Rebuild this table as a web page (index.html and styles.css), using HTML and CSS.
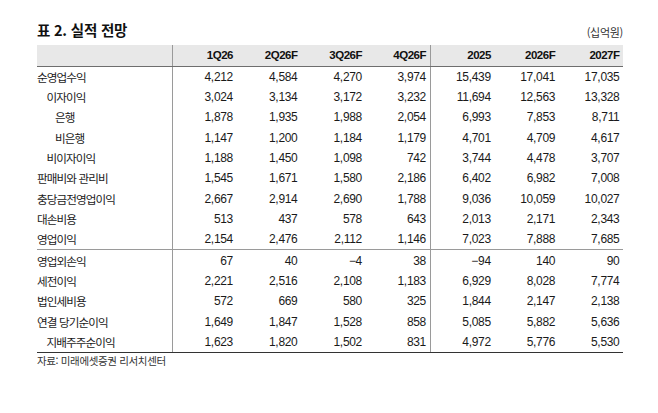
FILE: index.html
```html
<!DOCTYPE html>
<html lang="ko">
<head>
<meta charset="utf-8">
<link rel="stylesheet" href="styles.css">
</head>
<body>
<div class="page">
  <div class="top">
    <div class="title">표 2. 실적 전망</div>
    <div class="unit">(십억원)</div>
  </div>
  <table class="tbl">
    <colgroup>
      <col class="c-label">
      <col class="c-q"><col class="c-q"><col class="c-q"><col class="c-q">
      <col class="c-y"><col class="c-y"><col class="c-y">
    </colgroup>
    <thead>
      <tr>
        <th class="lab"></th>
        <th>1Q26</th><th>2Q26F</th><th>3Q26F</th><th class="div">4Q26F</th>
        <th>2025</th><th>2026F</th><th>2027F</th>
      </tr>
    </thead>
    <tbody>
      <tr><td class="lab">순영업수익</td><td>4,212</td><td>4,584</td><td>4,270</td><td class="div">3,974</td><td>15,439</td><td>17,041</td><td>17,035</td></tr>
      <tr><td class="lab i1">이자이익</td><td>3,024</td><td>3,134</td><td>3,172</td><td class="div">3,232</td><td>11,694</td><td>12,563</td><td>13,328</td></tr>
      <tr><td class="lab i2">은행</td><td>1,878</td><td>1,935</td><td>1,988</td><td class="div">2,054</td><td>6,993</td><td>7,853</td><td>8,711</td></tr>
      <tr><td class="lab i2">비은행</td><td>1,147</td><td>1,200</td><td>1,184</td><td class="div">1,179</td><td>4,701</td><td>4,709</td><td>4,617</td></tr>
      <tr><td class="lab i1">비이자이익</td><td>1,188</td><td>1,450</td><td>1,098</td><td class="div">742</td><td>3,744</td><td>4,478</td><td>3,707</td></tr>
      <tr><td class="lab">판매비와 관리비</td><td>1,545</td><td>1,671</td><td>1,580</td><td class="div">2,186</td><td>6,402</td><td>6,982</td><td>7,008</td></tr>
      <tr><td class="lab">충당금전영업이익</td><td>2,667</td><td>2,914</td><td>2,690</td><td class="div">1,788</td><td>9,036</td><td>10,059</td><td>10,027</td></tr>
      <tr><td class="lab">대손비용</td><td>513</td><td>437</td><td>578</td><td class="div">643</td><td>2,013</td><td>2,171</td><td>2,343</td></tr>
      <tr class="sep"><td class="lab">영업이익</td><td>2,154</td><td>2,476</td><td>2,112</td><td class="div">1,146</td><td>7,023</td><td>7,888</td><td>7,685</td></tr>
      <tr><td class="lab">영업외손익</td><td>67</td><td>40</td><td>−4</td><td class="div">38</td><td>−94</td><td>140</td><td>90</td></tr>
      <tr><td class="lab">세전이익</td><td>2,221</td><td>2,516</td><td>2,108</td><td class="div">1,183</td><td>6,929</td><td>8,028</td><td>7,774</td></tr>
      <tr><td class="lab">법인세비용</td><td>572</td><td>669</td><td>580</td><td class="div">325</td><td>1,844</td><td>2,147</td><td>2,138</td></tr>
      <tr><td class="lab">연결 당기순이익</td><td>1,649</td><td>1,847</td><td>1,528</td><td class="div">858</td><td>5,085</td><td>5,882</td><td>5,636</td></tr>
      <tr class="last"><td class="lab i1">지배주주순이익</td><td>1,623</td><td>1,820</td><td>1,502</td><td class="div">831</td><td>4,972</td><td>5,776</td><td>5,530</td></tr>
    </tbody>
  </table>
  <div class="source">자료: 미래에셋증권 리서치센터</div>
</div>
</body>
</html>
```

FILE: styles.css
```css
html, body {
  margin: 0;
  padding: 0;
  background: #ffffff;
}

.page {
  width: 586px;
  padding: 21px 0 0 37px;
  color: #1a1a1a;
  font-family: "Liberation Sans", "Noto Sans CJK KR", sans-serif;
}

.top {
  display: flex;
  justify-content: space-between;
  align-items: flex-end;
  height: 18px;
  margin-bottom: 5.5px;
}

.title {
  font-family: "Noto Sans CJK KR", sans-serif;
  font-weight: 700;
  font-size: 14.5px;
  line-height: 18px;
  letter-spacing: -0.2px;
  color: #111;
}

.unit {
  font-family: "Noto Sans CJK KR", sans-serif;
  font-size: 11px;
  line-height: 14px;
  letter-spacing: -0.3px;
  color: #333;
  padding-right: 0;
}

.tbl {
  width: 586px;
  table-layout: fixed;
  border-collapse: collapse;
  border-spacing: 0;
}

.c-label { width: 135px; }
.c-q { width: 64.5px; }
.c-y { width: 64.33px; }

.tbl th,
.tbl td {
  padding: 0 3.5px 0 0;
  text-align: right;
  white-space: nowrap;
  overflow: visible;
}

.tbl thead th {
  height: 21px;
  background: #e8e8e8;
  border-bottom: 1px solid #6e6e6e;
  font-weight: 700;
  font-size: 11.5px;
  letter-spacing: -0.5px;
  color: #111;
  line-height: 21px;
}

.tbl tbody td {
  height: 20.33px;
  font-size: 12px;
  letter-spacing: -0.3px;
  line-height: 20px;
  color: #1a1a1a;
}

.tbl .lab {
  text-align: left;
  padding: 0;
  border-right: 1px solid #9a9a9a;
  font-family: "Noto Sans CJK KR", sans-serif;
}

.tbl tbody .lab {
  font-size: 11.6px;
  letter-spacing: -0.9px;
}

.tbl .lab.i1 { padding-left: 9.5px; }
.tbl .lab.i2 { padding-left: 18px; }

.tbl .div {
  border-right: 1px solid #9a9a9a;
}

.tbl tr.sep td {
  border-bottom: 1px solid #9a9a9a;
}

.tbl tr.last td {
  border-bottom: 1.5px solid #333;
}

.source {
  font-family: "Noto Sans CJK KR", sans-serif;
  font-size: 10.5px;
  line-height: 14px;
  letter-spacing: -0.35px;
  color: #333;
  padding-top: 1px;
}
```
